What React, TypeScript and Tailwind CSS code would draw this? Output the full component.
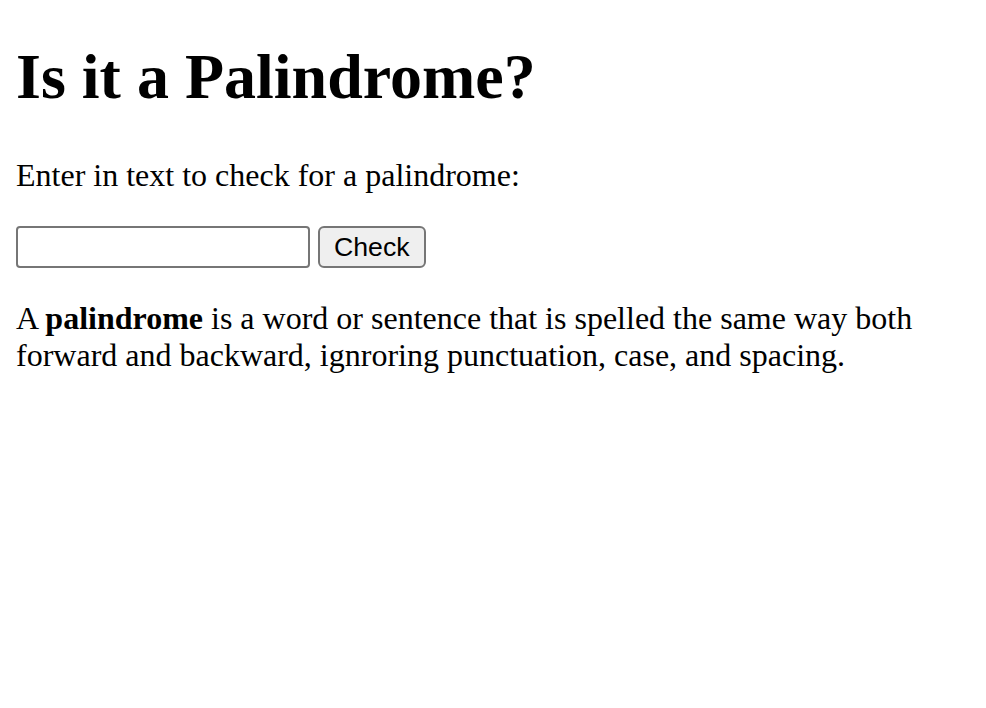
import React from "react";

const App = () => {
  return (
    <div className="min-h-screen bg-white px-[16px] text-black" style={{ fontFamily: '"Liberation Serif", "Times New Roman", serif' }}>
      <h1 className="pt-[40px] text-[64px] leading-[74px] font-bold">Is it a Palindrome?</h1>
      <p className="mt-[43px] text-[32px] leading-[37px]">Enter in text to check for a palindrome:</p>
      <div className="mt-[32px] flex h-[42px] items-stretch gap-[8px]">
        <input
          type="text"
          className="w-[294px] rounded-[4px] border-2 border-[#767676] bg-white px-[4px] outline-none"
        />
        <button
          type="button"
          className="rounded-[6px] border-2 border-[#767676] bg-[#efefef] px-[14px] text-[26.67px] leading-none"
          style={{ fontFamily: '"Liberation Sans", Arial, sans-serif' }}
        >
          Check
        </button>
      </div>
      <p className="mt-[32px] max-w-[930px] text-[32px] leading-[37px]">
        A <b>palindrome</b> is a word or sentence that is spelled the same way both forward and backward, ignroring punctuation, case, and spacing.
      </p>
    </div>
  );
};

export default App;
